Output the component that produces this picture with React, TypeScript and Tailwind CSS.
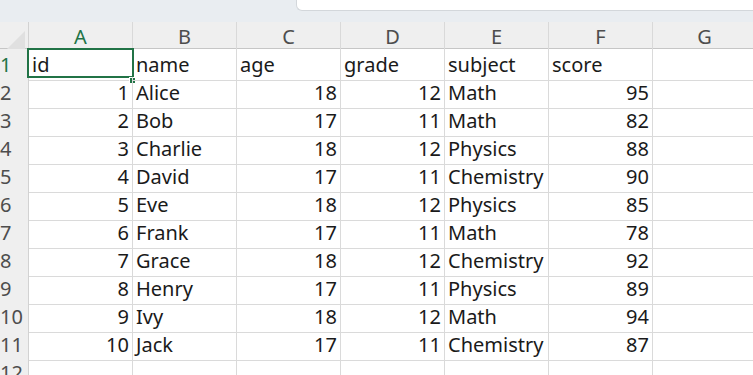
const columns = ["A", "B", "C", "D", "E", "F", "G"];

const rows: (string | number)[][] = [
  ["id", "name", "age", "grade", "subject", "score"],
  [1, "Alice", 18, 12, "Math", 95],
  [2, "Bob", 17, 11, "Math", 82],
  [3, "Charlie", 18, 12, "Physics", 88],
  [4, "David", 17, 11, "Chemistry", 90],
  [5, "Eve", 18, 12, "Physics", 85],
  [6, "Frank", 17, 11, "Math", 78],
  [7, "Grace", 18, 12, "Chemistry", 92],
  [8, "Henry", 17, 11, "Physics", 89],
  [9, "Ivy", 18, 12, "Math", 94],
  [10, "Jack", 17, 11, "Chemistry", 87],
  [],
];

const gridCols = "grid grid-cols-[29px_repeat(7,104px)]";

export default function App() {
  return (
    <div
      className="w-[753px] h-[375px] overflow-hidden bg-white"
      style={{ fontFamily: '"Noto Sans", "Liberation Sans", sans-serif' }}
    >
      {/* formula bar strip */}
      <div className="h-[22px] bg-[#e9edf1]">
        <div className="ml-[296px] h-[11px] bg-white border-l border-b border-[#d3d7db] rounded-bl-[6px]" />
      </div>

      {/* column headers */}
      <div className={`${gridCols} h-[27px] bg-[#efefef] border-b border-[#c6c6c6]`}>
        <div className="relative border-r border-[#d2d2d2]">
          <div className="absolute right-[3px] bottom-[3px] w-0 h-0 border-l-[18px] border-l-transparent border-b-[18px] border-b-[#e0e0e0]" />
        </div>
        {columns.map((c) => (
          <div
            key={c}
            className={`flex items-center justify-center border-r border-[#d9d9d9] text-[20px] ${
              c === "A" ? "text-[#217346]" : "text-[#4d4d4d]"
            }`}
          >
            {c}
          </div>
        ))}
      </div>

      {/* rows */}
      {rows.map((row, r) => (
        <div key={r} className={`${gridCols} h-[28px]`}>
          <div
            className={`flex items-center pt-[1px] bg-[#efefef] border-r border-b border-[#d2d2d2] text-[20px] ${
              r === 0 ? "text-[#217346]" : "text-[#4d4d4d]"
            }`}
          >
            {r + 1}
          </div>
          {columns.map((c, i) => {
            const v = row[i];
            const isNum = typeof v === "number";
            const selected = r === 0 && i === 0;
            return (
              <div
                key={c}
                className={`relative flex items-center pt-[1px] border-r border-b border-[#dadada] text-[20px] text-[#1a1a1a] whitespace-nowrap ${
                  isNum ? "justify-end pr-[3px]" : "justify-start pl-[3px]"
                }`}
              >
                {v ?? ""}
                {selected && (
                  <>
                    <div className="absolute -left-[2px] -top-[1px] w-[107px] h-[30px] border-2 border-[#217346]" />
                    <div className="absolute -right-[4px] -bottom-[4px] w-[7px] h-[7px] bg-[#217346] border border-white" />
                  </>
                )}
              </div>
            );
          })}
        </div>
      ))}
    </div>
  );
}
